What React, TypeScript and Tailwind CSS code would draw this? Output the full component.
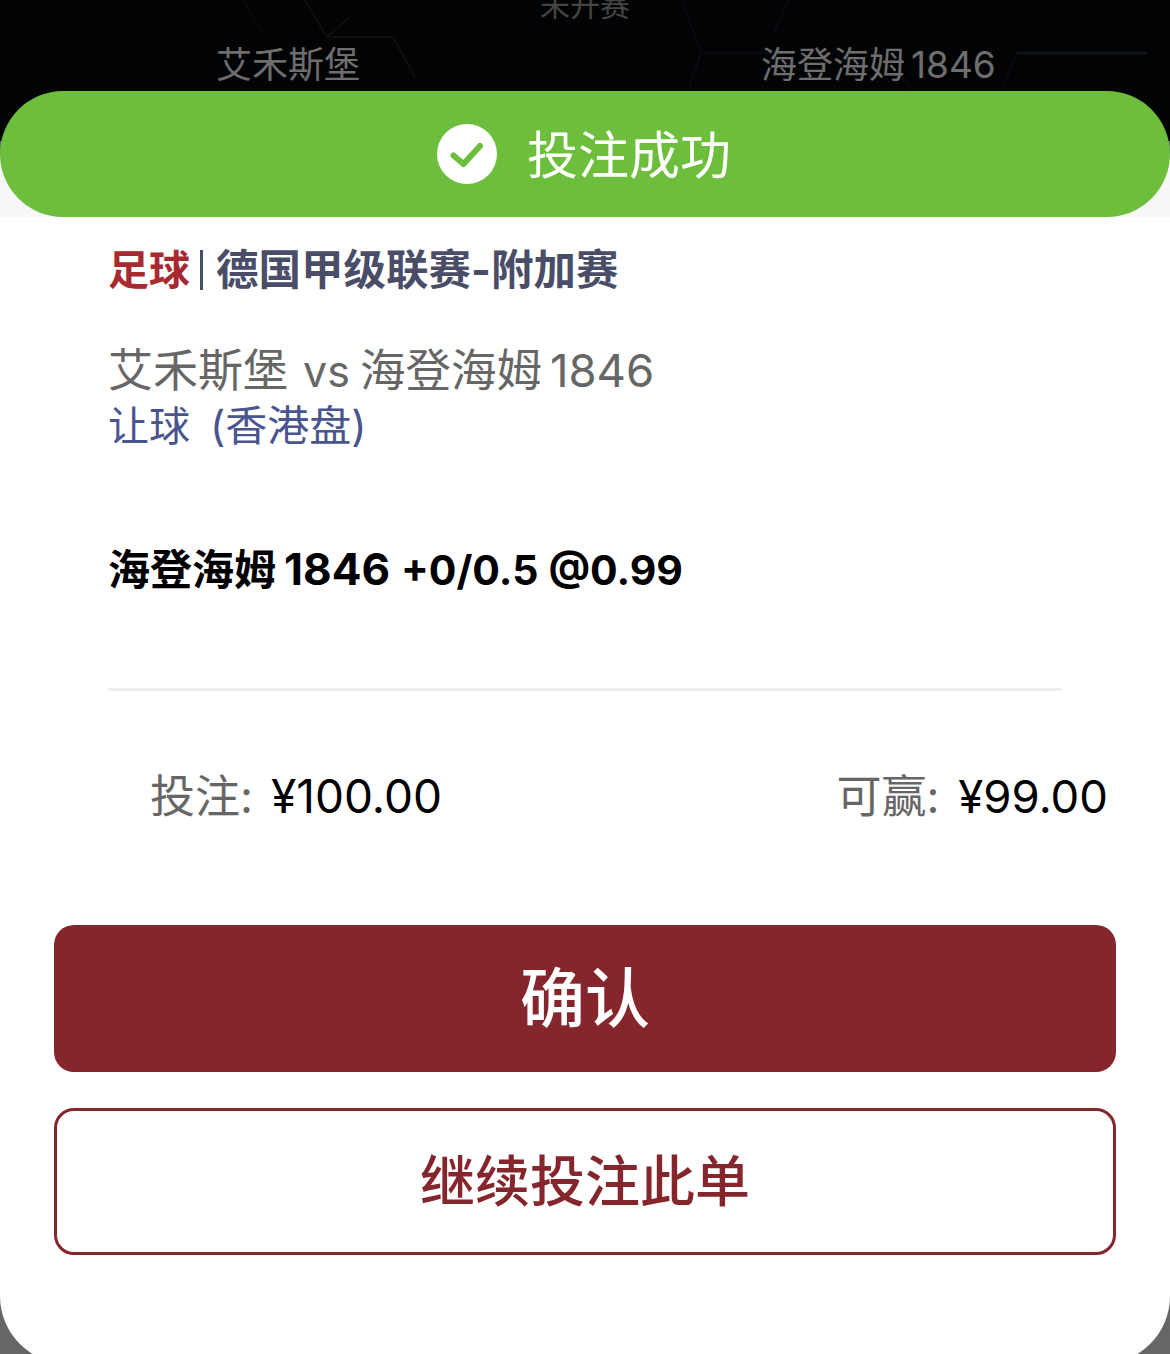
const F = "font-['Inter','Noto_Sans_CJK_SC',sans-serif]";

function Check() {
  return (
    <svg width="60" height="60" viewBox="0 0 60 60" className="shrink-0">
      <circle cx="30" cy="30" r="30" fill="#fff" />
      <path d="M16.5 31.5l10 8.5 16.5-18" fill="none" stroke="#6cbe3c" strokeWidth="6" strokeLinecap="round" strokeLinejoin="round" />
    </svg>
  );
}

function Backdrop() {
  return (
    <svg width="1170" height="154" viewBox="0 0 1170 154" className="absolute left-0 top-0" fill="none">
      <path d="M677 0l24 66-17 50M795 0l-22 47M701 66h72M904 90l13 26" stroke="#090a0e" strokeWidth="2" />
      <path d="M235 0l28 47" stroke="#0b0b0e" strokeWidth="1.5" />
      <path d="M297 0l30 50h66l22 40M350 30l-23 20" stroke="#120e0b" strokeWidth="2" />
      <path d="M1017 66h130" stroke="#0e1117" strokeWidth="3" />
      <path d="M1017 66l-13 32" stroke="#090a0e" strokeWidth="2" />
    </svg>
  );
}

export default function App() {
  return (
    <div className={`${F} relative w-[1170px] h-[1354px] overflow-hidden bg-[#666666]`}>
      <div className="relative h-[154px] bg-[#020305]">
        <Backdrop />
        <div className="relative flex justify-center text-[30px] leading-[36px] text-[#454545] -mt-[13px]">未开赛</div>
        <div className="relative flex mt-[20px] text-[36px] leading-[44px] text-[#6e6e6e]">
          <div className="ml-[216px] w-[545px]">艾禾斯堡</div>
          <div>海登海姆<span className="ml-[6px] text-[37px]">1846</span></div>
        </div>
      </div>
      <div className="absolute left-0 top-[91px] w-[1170px] h-[126px] z-10 rounded-[63px] bg-[#6cbe3c] flex items-center justify-center gap-[30px] pr-[2px]">
        <Check />
        <span className="text-[51px] leading-[60px] text-white relative top-[2px]">投注成功</span>
      </div>
      <div className="absolute inset-x-0 top-[154px] -bottom-[10px] bg-white rounded-b-[68px] flex flex-col">
        <div className="h-[63px] bg-[#f7f7f7] shrink-0" />
        <div className="pl-[108px] pt-[29px] text-[42.5px] leading-[48px] font-bold flex items-center">
          <span className="text-[#a82a30] text-[41px]">足球</span>
          <span className="ml-[10px] mr-[13px] w-[3px] h-[40px] bg-[#4a4d68]" />
          <span className="text-[#4a4d68]">德国甲级联赛-附加赛</span>
        </div>
        <div className="pl-[108px] mt-[49px] text-[45px] leading-[55px] text-[#666666]">
          艾禾斯堡<span className="ml-[15px] mr-[10px] text-[43px]">vs</span><span className="text-[45.5px]">海登海姆</span><span className="ml-[8px] text-[45.5px]">1846</span>
        </div>
        <div className="pl-[108px] text-[41px] leading-[54px] text-[#4a5590]">
          让球<span className="ml-[20px] text-[42px]">(香港盘)</span>
        </div>
        <div className="pl-[108px] mt-[90px] text-[42px] leading-[52px] font-bold text-black">
          海登海姆<span className="ml-[8px] text-[44px]">1846</span><span className="ml-[11px] text-[41px]">+0/0.5</span><span className="ml-[10px] text-[41px]">@0.99</span>
        </div>
        <div className="ml-[108px] w-[954px] h-[3px] bg-[#eeeeee] mt-[92px]" />
        <div className="flex justify-between pl-[150px] pr-[62px] mt-[77px] text-[46px] leading-[56px]">
          <div><span className="text-[#666666] text-[45px]">投注:</span><span className="ml-[18px] text-black">¥100.00</span></div>
          <div><span className="text-[#666666] text-[45px]">可赢:</span><span className="ml-[19px] text-[45.5px] text-black">¥99.00</span></div>
        </div>
        <div className="mx-[54px] mt-[100px] h-[147px] rounded-[20px] bg-[#85262c] flex items-center justify-center text-white text-[65px] font-medium">确认</div>
        <div className="mx-[54px] mt-[36px] h-[147px] rounded-[20px] border-[3px] border-[#85262c] bg-white flex items-center justify-center text-[#85262c] text-[55px] font-medium">继续投注此单</div>
      </div>
    </div>
  );
}
